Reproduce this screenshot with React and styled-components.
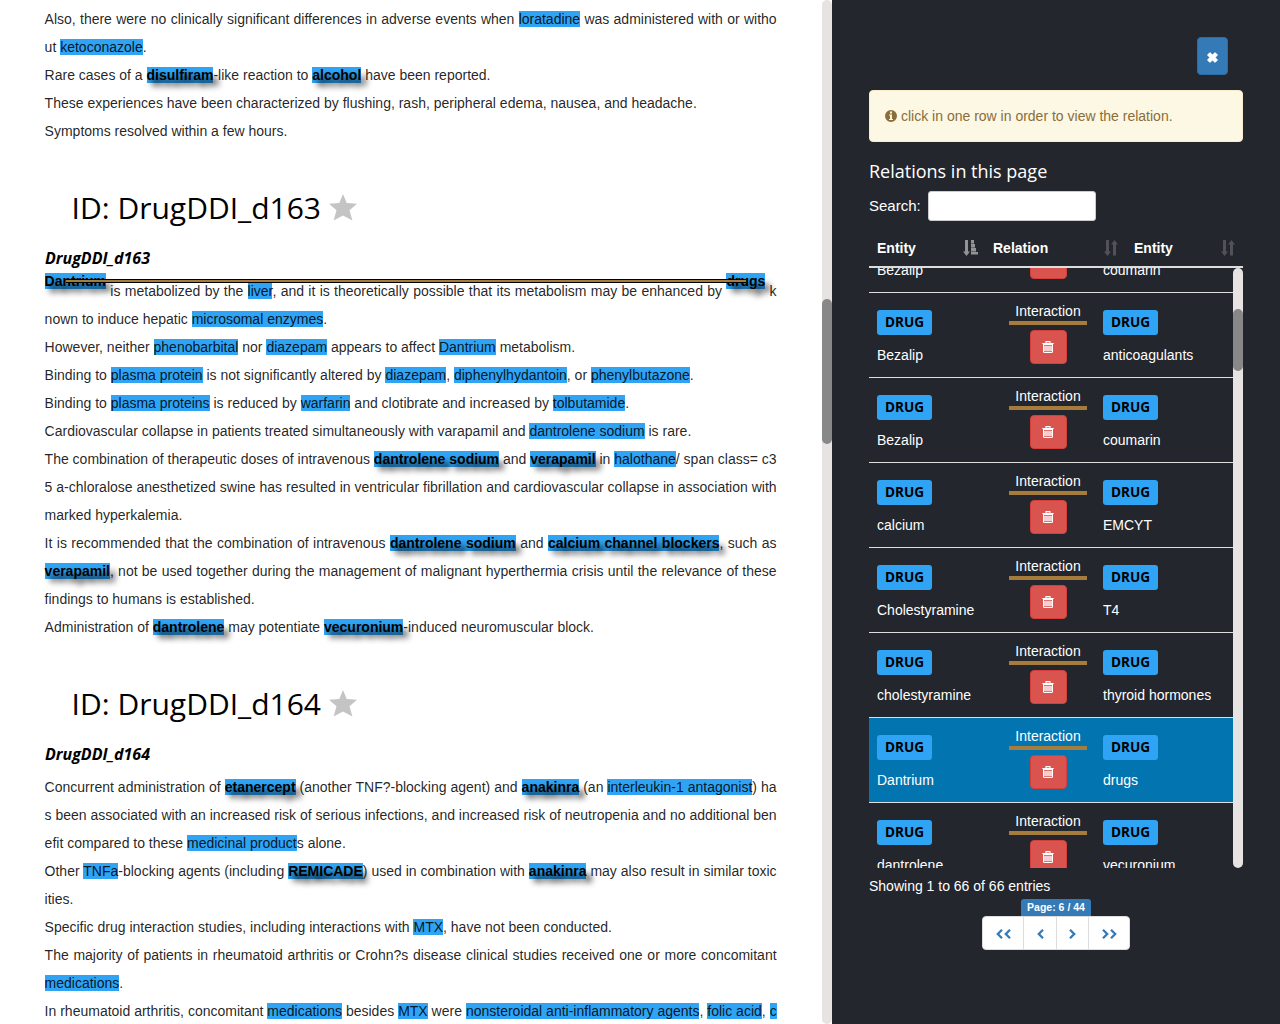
import React from 'react';
import styled, { createGlobalStyle, css } from 'styled-components';

const Global = createGlobalStyle`
  *, *::before, *::after { box-sizing: border-box; }
  html, body { margin: 0; height: 100%; overflow: hidden; background: #fff; }
  body { font-family: "Liberation Sans", Arial, sans-serif; font-size: 14px; line-height: 20px; color: #000; }
`;

const Page = styled.div`
  display: flex;
  width: 1280px;
  height: 1024px;
  overflow: hidden;
`;

const Documents = styled.main`
  position: relative;
  width: 822px;
  padding: 5px 45px 0 44.6px;
  overflow: hidden;
`;

const ScrollTrack = styled.div`
  width: 10px;
  height: ${(p) => p.$height}px;
  padding-top: ${(p) => p.$offset}px;
  flex: none;
  background: #e6e3e2;
  border-radius: 5px;
`;

const ScrollThumb = styled.div`
  height: ${(p) => p.$height}px;
  background: #888;
  border-radius: 5px;
`;

const Line = styled.div`
  height: 28px;
  width: 732px;
  line-height: 28px;
  color: rgba(0, 0, 0, 0.87);
  white-space: nowrap;
  text-align: left;
  ${(p) => p.$full && css`text-align: justify; text-align-last: justify; white-space: normal;`}
`;

const Entity = styled.span`
  background: #2fa4f5;
  ${(p) => p.$related && css`
    color: #000;
    font-weight: 700;
    text-shadow: 5px 6px 6px #000;
  `}
  ${(p) => p.$raised && css`
    position: relative;
    top: -10px;
  `}
`;

const Title = styled.h2`
  display: flex;
  align-items: center;
  gap: 8px;
  height: 40px;
  margin: 43px 0 0 27px;
  font: 400 30px/40px "Open Sans", sans-serif;
`;

const Subtitle = styled.h4`
  height: 20px;
  margin: 20px 0 9px 0.4px;
  font: italic 700 16px/20px "Open Sans", sans-serif;
`;

const Connector = styled.div`
  position: absolute;
  left: 66px;
  top: 279px;
  width: 680px;
  height: 4px;
  background: #a67c3d;
  border: solid #000;
  border-width: 1px 0;
`;

const Sidebar = styled.aside`
  display: flex;
  flex-direction: column;
  flex: 1;
  padding: 37px 37px 0;
  background: #23262d;
  color: #fff;
`;

const CloseButton = styled.button`
  display: flex;
  align-items: center;
  justify-content: center;
  align-self: flex-end;
  width: 31px;
  height: 38px;
  margin-right: 15px;
  padding: 3px 0 0;
  flex: none;
  background: #337ab7;
  border: 1px solid #2e6da4;
  border-radius: 4px;
`;

const Notice = styled.div`
  display: flex;
  align-items: center;
  gap: 4px;
  height: 52px;
  margin-top: 15px;
  padding: 0 15px;
  background: #fcf8e3;
  border: 1px solid #faebcc;
  border-radius: 4px;
  color: #8a6d3b;
`;

const PanelTitle = styled.h4`
  margin: 19px 0 0;
  font: 400 18px/20px "Open Sans", sans-serif;
`;

const SearchRow = styled.label`
  display: flex;
  align-items: center;
  height: 30px;
  margin-top: 10px;
  font-size: 15px;
`;

const SearchLabel = styled.span`
  width: 59px;
  padding-bottom: 1px;
`;

const SearchInput = styled.input`
  width: 168px;
  height: 30px;
  padding: 5px 10px;
  background: #fff;
  border: 1px solid #ccc;
  border-radius: 3px;
`;

const TableHead = styled.div`
  display: grid;
  grid-template-columns: 116px 141px 117px;
  height: 39px;
  margin-top: 8px;
  padding-top: 1px;
  border-bottom: 2px solid #ddd;
`;

const HeadCell = styled.div`
  display: flex;
  align-items: center;
  justify-content: space-between;
  padding: 0 ${(p) => (p.$sorted ? 7 : 8)}px 0 8px;
  font-weight: 700;
`;

const TableView = styled.div`
  display: flex;
  height: 600px;
  overflow: hidden;
`;

const Rows = styled.div`
  width: 364px;
  height: 661px;
  margin-top: -61px;
`;

const Row = styled.div`
  display: grid;
  grid-template-columns: 132px 94px 138px;
  height: 85px;
  border-top: 1px solid #ddd;
  background: ${(p) => (p.$selected ? '#0275b1' : 'transparent')};
`;

const EntityCell = styled.div`
  display: flex;
  flex-direction: column;
  align-items: flex-start;
  gap: 10px;
  padding: 17px 8px 0;
`;

const Tag = styled.span`
  width: 55px;
  height: 25px;
  background: #2fa4f5;
  border-radius: 3px;
  color: #000;
  text-align: center;
  font: 700 13.600px/24px "Open Sans", sans-serif;
`;

const RelationCell = styled.div`
  display: flex;
  flex-direction: column;
  align-items: center;
  padding: 8px 8px 0;
`;

const RelationName = styled.div`
  width: 78px;
  height: 24px;
  border-bottom: 4px solid #a67c3d;
  text-align: center;
`;

const DeleteButton = styled.button`
  display: flex;
  align-items: center;
  justify-content: center;
  width: 37px;
  height: 34px;
  margin: 5px 0 0 1px;
  padding: 0 1px 0 0;
  background: #d9534f;
  border: 1px solid #d43f3a;
  border-radius: 4px;
`;

const Summary = styled.div`
  margin-top: 8px;
  height: 20px;
`;

const Pager = styled.div`
  display: flex;
  flex-direction: column;
  align-items: center;
  margin-top: 3px;
`;

const PageBadge = styled.span`
  width: 70px;
  height: 17px;
  background: #337ab7;
  border-radius: 3px 3px 0 0;
  text-align: center;
  font-size: 10.5px;
  line-height: 17px;
  font-weight: 700;
`;

const PageButtons = styled.div`
  display: flex;
  height: 34px;
  background: #fff;
  border: 1px solid #ddd;
  border-radius: 4px;
`;

const PageButton = styled.button`
  display: flex;
  align-items: center;
  justify-content: center;
  gap: 1px;
  width: ${(p) => p.$width}px;
  padding: 2px 0 0;
  background: none;
  border: 0;
  border-left: ${(p) => (p.$first ? 0 : '1px solid #ddd')};
`;

const StarIcon = styled.svg`
  margin-bottom: 2px;
`;

const Star = () => (
  <StarIcon width="28" height="27" viewBox="0 0 28 27" fill="#c4c4c4">
    <path d="M14 0l3.700 9.100L28 9.700l-7.500 6.600 2.900 10.200L14 21.600l-9.400 4.900 2.900-10.200L0 9.700l10.300-.6z" />
  </StarIcon>
);

const Cross = () => (
  <svg width="11" height="11" viewBox="0 0 11 11" fill="#fff">
    <path d="M.4 2.600L2.600.4q.4-.3.8 0l2.100 2.100L7.600.4q.4-.3.8 0l2.200 2.200q.3.4 0 .8L8.500 5.500l2.100 2.100q.3.4 0 .8l-2.200 2.200q-.4.3-.8 0L5.500 8.500l-2.100 2.100q-.4.3-.8 0L.4 8.400q-.3-.4 0-.8l2.100-2.100L.4 3.400q-.3-.4 0-.8z" />
  </svg>
);

const Info = () => (
  <svg width="12" height="12" viewBox="0 0 12 12" fill="#8a6d3b">
    <path fillRule="evenodd" d="M6 0a6 6 0 110 12A6 6 0 016 0zM5 1.500v2h2v-2zM4 4.500v1h1V9H4v1h4V9H7V4.500z" />
  </svg>
);

const Trash = () => (
  <svg width="12" height="12" viewBox="0 0 12 12">
    <path d="M4 1.900V.6h4v1.300" fill="none" stroke="#fff" strokeWidth="1.1" />
    <path d="M.3 2h11.400v1H.3z" fill="#fff" />
    <path d="M1 3h10v7.500q0 1.500-1.500 1.500h-7Q1 12 1 10.500z" fill="#fff" />
    <path d="M2 4h8v.9H2zM2 10h8v.9H2z" fill="#d9534f" opacity=".8" />
    <path d="M2 4.900h8V10H2z" fill="#d9534f" opacity=".28" />
  </svg>
);

const SortIcon = ({ sorted }) => (
  <svg width={sorted ? 15 : 14} height="16" viewBox={sorted ? '0 0 15 16' : '0 0 14 16'} fill={sorted ? '#929396' : '#505257'}>
    <path d="M2 0h3v11.500h2L3.500 16 0 11.500h2z" />
    {sorted
      ? (
        <>
          <path d="M8 0h3v3H8zM8 4h4v3H8zM8 8h5v3H8zM8 12h7v2.500H8z" />
          <path opacity=".6" d="M8 3h3v1H8zM8 7h4v1H8zM8 11h5v1H8z" />
        </>
      )
      : <path d="M9 15.500h3V4.500h2L10.500 0 7 4.500h2z" />}
  </svg>
);

const Chevron = ({ left }) => (
  <svg width="7" height="10" viewBox="0 0 7 10" fill="none" stroke="#337ab7" strokeWidth="2.3">
    <path d={left ? 'M6 .8L1.800 5 6 9.200' : 'M1 .8L5.200 5 1 9.200'} />
  </svg>
);

/* Text markup: [term] is an entity, [*term] a related one, [^term] a selected one. */
const marked = (text) =>
  text.split(/(\[[^\]]+\])/).map((part, i) => {
    if (part[0] !== '[') return part;
    const kind = part[1];
    const related = kind === '*' || kind === '^';
    return (
      <Entity key={i} $related={related} $raised={kind === '^'}>
        {part.slice(related ? 2 : 1, -1)}
      </Entity>
    );
  });

/* A leading "=" stands for a line that runs the full width of the column. */
const documents = [
  { lines: [
    '=Also, there were no clinically significant differences in adverse events when [loratadine] was administered with or witho',
    'ut [ketoconazole].',
    'Rare cases of a [*disulfiram]-like reaction to [*alcohol] have been reported.',
    'These experiences have been characterized by flushing, rash, peripheral edema, nausea, and headache.',
    'Symptoms resolved within a few hours.',
  ] },
  { id: 'DrugDDI_d163', lines: [
    '=[^Dantrium] is metabolized by the [liver], and it is theoretically possible that its metabolism may be enhanced by [^drugs] k',
    'nown to induce hepatic [microsomal enzymes].',
    'However, neither [phenobarbital] nor [diazepam] appears to affect [Dantrium] metabolism.',
    'Binding to [plasma protein] is not significantly altered by [diazepam], [diphenylhydantoin], or [phenylbutazone].',
    'Binding to [plasma proteins] is reduced by [warfarin] and clotibrate and increased by [tolbutamide].',
    'Cardiovascular collapse in patients treated simultaneously with varapamil and [dantrolene sodium] is rare.',
    '=The combination of therapeutic doses of intravenous [*dantrolene sodium] and [*verapamil] in [halothane]/ span class= c3',
    '=5 a-chloralose anesthetized swine has resulted in ventricular fibrillation and cardiovascular collapse in association with',
    'marked hyperkalemia.',
    '=It is recommended that the combination of intravenous [*dantrolene sodium] and [*calcium channel blockers], such as',
    '=[*verapamil], not be used together during the management of malignant hyperthermia crisis until the relevance of these',
    'findings to humans is established.',
    'Administration of [*dantrolene] may potentiate [*vecuronium]-induced neuromuscular block.',
  ] },
  { id: 'DrugDDI_d164', lines: [
    '=Concurrent administration of [*etanercept] (another TNF?-blocking agent) and [*anakinra] (an [interleukin-1 antagonist]) ha',
    '=s been associated with an increased risk of serious infections, and increased risk of neutropenia and no additional ben',
    'efit compared to these [medicinal product]s alone.',
    '=Other [TNFa]-blocking agents (including [*REMICADE]) used in combination with [*anakinra] may also result in similar toxic',
    'ities.',
    'Specific drug interaction studies, including interactions with [MTX], have not been conducted.',
    '=The majority of patients in rheumatoid arthritis or Crohn?s disease clinical studies received one or more concomitant',
    '[medications].',
    '=In rheumatoid arthritis, concomitant [medications] besides [MTX] were [nonsteroidal anti-inflammatory agents], [folic acid], [c]',
  ] },
];

const relations = [
  ['Bezalip', 'coumarin'],
  ['Bezalip', 'anticoagulants'],
  ['Bezalip', 'coumarin'],
  ['calcium', 'EMCYT'],
  ['Cholestyramine', 'T4'],
  ['cholestyramine', 'thyroid hormones'],
  ['Dantrium', 'drugs'],
  ['dantrolene', 'vecuronium'],
];

export default function App() {
  return (
    <Page>
      <Global />
      <Documents>
        {documents.map((doc, i) => (
          <section key={i}>
            {doc.id && <Title><span>ID: {doc.id}</span><Star /></Title>}
            {doc.id && <Subtitle>{doc.id}</Subtitle>}
            {doc.lines.map((line, j) => (
              <Line key={j} $full={line[0] === '='}>{marked(line.replace(/^=/, ''))}</Line>
            ))}
          </section>
        ))}
        <Connector />
      </Documents>
      <ScrollTrack $height={1024} $offset={299}><ScrollThumb $height={145} /></ScrollTrack>
      <Sidebar>
        <CloseButton aria-label="Close"><Cross /></CloseButton>
        <Notice><Info /><span>click in one row in order to view the relation.</span></Notice>
        <PanelTitle>Relations in this page</PanelTitle>
        <SearchRow><SearchLabel>Search:</SearchLabel><SearchInput /></SearchRow>
        <TableHead>
          <HeadCell $sorted>Entity<SortIcon sorted /></HeadCell>
          <HeadCell>Relation<SortIcon /></HeadCell>
          <HeadCell>Entity<SortIcon /></HeadCell>
        </TableHead>
        <TableView>
          <Rows>
            {relations.map(([from, to], i) => (
              <Row key={i} $selected={from === 'Dantrium'}>
                <EntityCell><Tag>DRUG</Tag>{from}</EntityCell>
                <RelationCell>
                  <RelationName>Interaction</RelationName>
                  <DeleteButton aria-label="Delete"><Trash /></DeleteButton>
                </RelationCell>
                <EntityCell><Tag>DRUG</Tag>{to}</EntityCell>
              </Row>
            ))}
          </Rows>
          <ScrollTrack $height={600} $offset={41}><ScrollThumb $height={62} /></ScrollTrack>
        </TableView>
        <Summary>Showing 1 to 66 of 66 entries</Summary>
        <Pager>
          <PageBadge>Page: 6 / 44</PageBadge>
          <PageButtons>
            <PageButton $first $width={40}><Chevron left /><Chevron left /></PageButton>
            <PageButton $width={33}><Chevron left /></PageButton>
            <PageButton $width={32}><Chevron /></PageButton>
            <PageButton $width={41}><Chevron /><Chevron /></PageButton>
          </PageButtons>
        </Pager>
      </Sidebar>
    </Page>
  );
}
